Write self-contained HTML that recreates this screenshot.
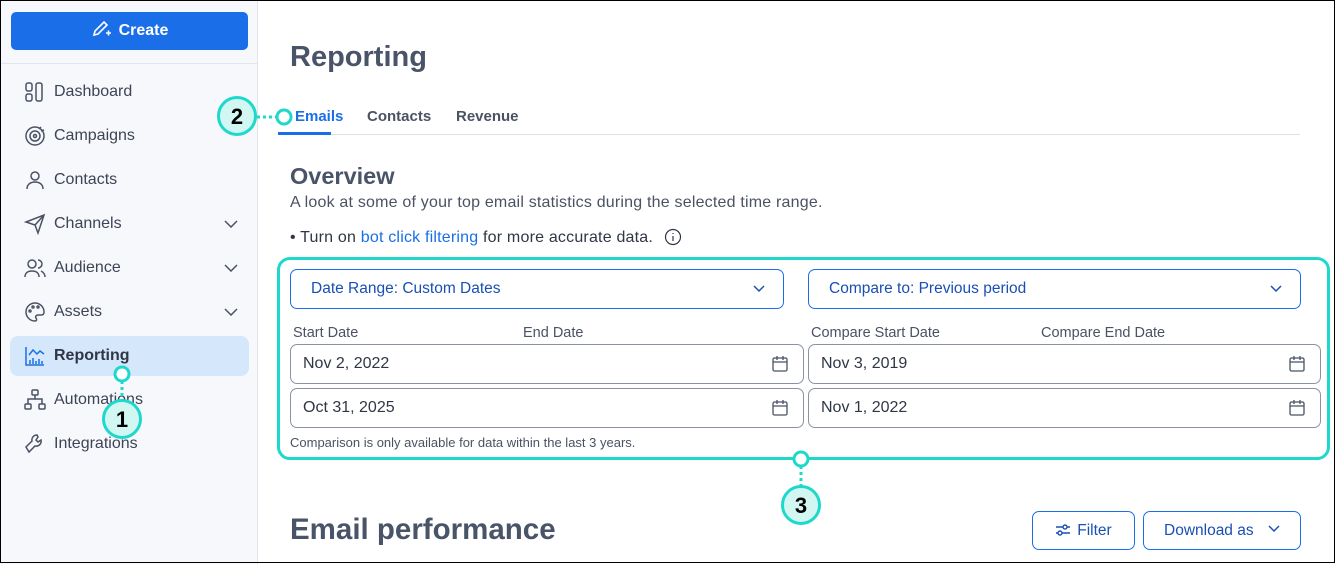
<!DOCTYPE html>
<html><head><style>
*{margin:0;padding:0;box-sizing:border-box}
body{width:1335px;height:563px;overflow:hidden;background:#fff;font-family:"Liberation Sans",sans-serif;position:relative}
#w{position:absolute;left:0;top:1px;width:1335px;height:563px}
.a{position:absolute;white-space:nowrap}
.side{position:absolute;left:0;top:-1px;width:258px;height:564px;background:#f7f8fc;border-right:1px solid #e1e5ec}
.nav{position:absolute;left:54px;font-size:16px;color:#3c4455;transform:translateY(-50%)}
.ic{position:absolute;left:24px;width:22px;height:22px;transform:translateY(-50%)}
.chev{position:absolute;left:224px;transform:translateY(-50%)}
.box{position:absolute;border:1px solid #8a93a3;border-radius:7px;background:#fff}
.lbl{position:absolute;font-size:14.5px;color:#4a5263}
.val{position:absolute;left:12px;top:10px;font-size:16px;color:#2f3645}
.cal{position:absolute;right:14px;top:10px}
</style></head><body>
<div id="w">
<div class="side">
  <div class="a" style="left:11px;top:12px;width:237px;height:38px;background:#1a6fe8;border-radius:5px;color:#fff;font-weight:bold;font-size:16px;text-align:center;line-height:38px">
    <svg width="22" height="20" viewBox="0 0 22 20" style="vertical-align:-4px;margin-right:6px" fill="none" stroke="#fff" stroke-width="1.6"><path d="M3 16l1-4L13 3l3 3-9 9z"/><path d="M15 14h5M17.5 11.5v5"/></svg>Create</div>
  <div class="a" style="left:0;top:63px;width:257px;height:1px;background:#e1e5ec"></div>
  <div class="a" style="left:10px;top:336px;width:239px;height:40px;background:#d5e7fb;border-radius:8px"></div>
  <svg class="ic" style="top:92px" viewBox="0 0 22 22" fill="none" stroke="#4a5263" stroke-width="1.5"><rect x="2" y="2" width="6" height="8" rx="2"/><rect x="2" y="13" width="6" height="7" rx="2"/><rect x="12" y="2" width="6" height="18" rx="2"/></svg>
  <div class="nav" style="top:92px">Dashboard</div>
  <svg class="ic" style="top:136px" viewBox="0 0 22 22" fill="none" stroke="#4a5263" stroke-width="1.5"><circle cx="11" cy="11" r="9"/><circle cx="11" cy="11" r="5"/><circle cx="11" cy="11" r="1.5"/><path d="M15 4l2-2M17 6l3-1"/></svg>
  <div class="nav" style="top:136px">Campaigns</div>
  <svg class="ic" style="top:180px" viewBox="0 0 22 22" fill="none" stroke="#4a5263" stroke-width="1.5"><circle cx="11" cy="7" r="4"/><path d="M3 20c0-5 4-7 8-7s8 2 8 7"/></svg>
  <div class="nav" style="top:180px">Contacts</div>
  <svg class="ic" style="top:224px" viewBox="0 0 22 22" fill="none" stroke="#4a5263" stroke-width="1.5"><path d="M2 9L20 2l-6 18-3-8z M11 12l9-10"/></svg>
  <div class="nav" style="top:224px">Channels</div>
  <svg class="ic" style="top:268px" viewBox="0 0 22 22" fill="none" stroke="#4a5263" stroke-width="1.5"><circle cx="8" cy="7" r="4"/><path d="M1 20c0-4 3-6 7-6s7 2 7 6M14 3a4 4 0 010 8M17 14c2 1 4 3 4 6"/></svg>
  <div class="nav" style="top:268px">Audience</div>
  <svg class="ic" style="top:312px" viewBox="0 0 22 22" fill="none" stroke="#4a5263" stroke-width="1.5"><path d="M11 2a9 9 0 100 18c2 0 2-2 1-3s0-3 2-3h3c2 0 3-1 3-3 0-5-4-9-9-9z"/><circle cx="6" cy="10" r="1"/><circle cx="9" cy="6" r="1"/><circle cx="14" cy="6" r="1"/></svg>
  <div class="nav" style="top:312px">Assets</div>
  <svg class="ic" style="top:356px" viewBox="0 0 22 22" fill="none" stroke="#1a6fe8" stroke-width="1.5"><path d="M2 2v18h18M5 10l4-5 4 4 3-3 4 3M6 19v-4M9 19v-6M12 19v-3M15 19v-5M18 19v-3"/></svg>
  <div class="nav" style="top:356px;font-weight:bold;color:#2f3645">Reporting</div>
  <svg class="ic" style="top:400px" viewBox="0 0 22 22" fill="none" stroke="#4a5263" stroke-width="1.5"><rect x="8" y="1" width="6" height="5" rx="1"/><rect x="1" y="15" width="6" height="5" rx="1"/><rect x="15" y="15" width="6" height="5" rx="1"/><path d="M11 6v4M4 15v-5h14v5"/></svg>
  <div class="nav" style="top:400px">Automations</div>
  <svg class="ic" style="top:444px" viewBox="0 0 22 22" fill="none" stroke="#4a5263" stroke-width="1.5"><path d="M13 2a5 5 0 00-5 6L2 14l3 5 6-6a5 5 0 006-6l-3 2-2-2 2-3z"/></svg>
  <div class="nav" style="top:444px">Integrations</div>
  <svg class="chev" style="top:224px" width="14" height="8" viewBox="0 0 14 8" fill="none" stroke="#4a5263" stroke-width="1.5"><path d="M1 1l6 6 6-6"/></svg>
  <svg class="chev" style="top:268px" width="14" height="8" viewBox="0 0 14 8" fill="none" stroke="#4a5263" stroke-width="1.5"><path d="M1 1l6 6 6-6"/></svg>
  <svg class="chev" style="top:312px" width="14" height="8" viewBox="0 0 14 8" fill="none" stroke="#4a5263" stroke-width="1.5"><path d="M1 1l6 6 6-6"/></svg>
</div>

<div class="a" style="left:290px;top:40px;font-size:29px;font-weight:bold;color:#4a5468">Reporting</div>
<div class="a" style="left:295px;top:107px;font-size:15px;font-weight:bold;color:#1a6fe8">Emails</div>
<div class="a" style="left:367px;top:107px;font-size:15px;font-weight:bold;color:#4a5263">Contacts</div>
<div class="a" style="left:456px;top:107px;font-size:15px;font-weight:bold;color:#4a5263">Revenue</div>
<div class="a" style="left:278px;top:133px;width:1022px;height:1px;background:#dde1e7"></div>
<div class="a" style="left:278px;top:131px;width:53px;height:3px;background:#1a6fe8"></div>
<div class="a" style="left:290px;top:162px;font-size:23.5px;font-weight:bold;color:#4a5468">Overview</div>
<div class="a" style="left:290px;top:193px;font-size:16px;color:#4a5263;letter-spacing:0.2px">A look at some of your top email statistics during the selected time range.</div>
<div class="a" style="left:290px;top:227px;font-size:16px;color:#2f3645;letter-spacing:0.2px">• Turn on <span style="color:#1a6fe8">bot click filtering</span> for more accurate data.
<svg width="18" height="18" viewBox="0 0 18 18" style="vertical-align:-4px;margin-left:6px" fill="none" stroke="#2f3645" stroke-width="1.2"><circle cx="9" cy="9" r="7.5"/><path d="M9 8v5M9 5v1"/></svg></div>

<div class="a" style="left:277px;top:256px;width:1053px;height:203px;border:3px solid #1fd8cc;border-radius:13px"></div>
<div class="box" style="left:290px;top:268px;width:494px;height:40px;border-color:#1a6fe8"><div class="val" style="left:20px;color:#1a4fb5;font-size:15.5px">Date Range: Custom Dates</div>
<svg style="position:absolute;right:18px;top:15px" width="12" height="8" viewBox="0 0 12 8" fill="none" stroke="#1a4fb5" stroke-width="1.5"><path d="M1 1l5 5 5-5"/></svg></div>
<div class="box" style="left:808px;top:268px;width:493px;height:40px;border-color:#1a6fe8"><div class="val" style="left:20px;color:#1a4fb5;font-size:15.5px">Compare to: Previous period</div>
<svg style="position:absolute;right:18px;top:15px" width="12" height="8" viewBox="0 0 12 8" fill="none" stroke="#1a4fb5" stroke-width="1.5"><path d="M1 1l5 5 5-5"/></svg></div>
<div class="lbl" style="left:293px;top:324px">Start Date</div>
<div class="lbl" style="left:523px;top:324px">End Date</div>
<div class="lbl" style="left:811px;top:324px">Compare Start Date</div>
<div class="lbl" style="left:1041px;top:324px">Compare End Date</div>
<div class="box" style="left:290px;top:343px;width:514px;height:40px"><div class="val">Nov 2, 2022</div><svg class="cal" width="18" height="18" viewBox="0 0 18 18" fill="none" stroke="#4a5263" stroke-width="1.3"><rect x="2" y="3" width="14" height="13" rx="1.5"/><path d="M2 7h14M6 1v4M12 1v4"/></svg></div>
<div class="box" style="left:808px;top:343px;width:513px;height:40px"><div class="val">Nov 3, 2019</div><svg class="cal" width="18" height="18" viewBox="0 0 18 18" fill="none" stroke="#4a5263" stroke-width="1.3"><rect x="2" y="3" width="14" height="13" rx="1.5"/><path d="M2 7h14M6 1v4M12 1v4"/></svg></div>
<div class="box" style="left:290px;top:387px;width:514px;height:40px"><div class="val">Oct 31, 2025</div><svg class="cal" width="18" height="18" viewBox="0 0 18 18" fill="none" stroke="#4a5263" stroke-width="1.3"><rect x="2" y="3" width="14" height="13" rx="1.5"/><path d="M2 7h14M6 1v4M12 1v4"/></svg></div>
<div class="box" style="left:808px;top:387px;width:513px;height:40px"><div class="val">Nov 1, 2022</div><svg class="cal" width="18" height="18" viewBox="0 0 18 18" fill="none" stroke="#4a5263" stroke-width="1.3"><rect x="2" y="3" width="14" height="13" rx="1.5"/><path d="M2 7h14M6 1v4M12 1v4"/></svg></div>
<div class="a" style="left:290px;top:434px;font-size:13px;color:#4a5263">Comparison is only available for data within the last 3 years.</div>

<div class="a" style="left:290px;top:512px;font-size:29.5px;font-weight:bold;color:#4a5468">Email performance</div>
<div class="box" style="left:1032px;top:510px;width:103px;height:39px;border-color:#1a6fe8;text-align:center;line-height:37px;font-size:15.5px;color:#1a4fb5">
<svg width="16" height="14" viewBox="0 0 16 14" style="vertical-align:-2px;margin-right:6px" fill="none" stroke="#1a4fb5" stroke-width="1.4"><path d="M1 4h14M1 10h14"/><circle cx="10" cy="4" r="2" fill="#fff"/><circle cx="5" cy="10" r="2" fill="#fff"/></svg>Filter</div>
<div class="box" style="left:1143px;top:510px;width:158px;height:39px;border-color:#1a6fe8;line-height:37px;font-size:15.5px;color:#1a4fb5;padding-left:20px">Download as
<svg width="12" height="8" viewBox="0 0 12 8" style="margin-left:10px;vertical-align:2px" fill="none" stroke="#1a4fb5" stroke-width="1.5"><path d="M1 1l5 5 5-5"/></svg></div>

<svg class="a" style="left:0;top:-1px" width="1335" height="563">
<g stroke="#1fd8cc" stroke-width="3" stroke-dasharray="3 3">
<line x1="257" y1="117" x2="277" y2="117"/><line x1="122" y1="381" x2="122" y2="400"/><line x1="801" y1="466" x2="801" y2="486"/></g>
<g fill="#fff" stroke="#1fd8cc" stroke-width="3"><circle cx="284" cy="117" r="7"/><circle cx="122" cy="374" r="7"/><circle cx="801" cy="459" r="7"/></g>
<g fill="#d2f7f3" stroke="#1fd8cc" stroke-width="3"><circle cx="237" cy="116" r="18.5"/><circle cx="122" cy="419" r="18.5"/><circle cx="801" cy="505" r="18.5"/></g>
<g font-family="Liberation Sans" font-weight="bold" font-size="22" fill="#000" text-anchor="middle"><text x="237" y="124">2</text><text x="122" y="427">1</text><text x="801" y="513">3</text></g>
</svg>
</div>
<div class="a" style="left:0;top:0;width:1335px;height:563px;border:1px solid #000"></div>
</body></html>
